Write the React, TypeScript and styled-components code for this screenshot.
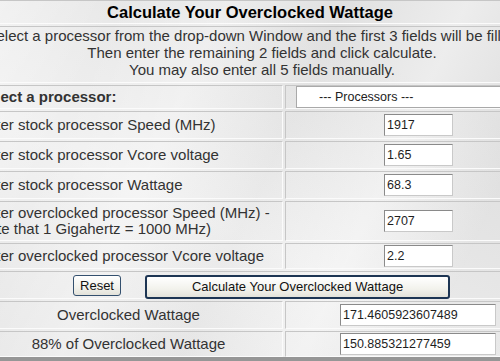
import styled, { createGlobalStyle } from "styled-components";

const GlobalStyle = createGlobalStyle`
  html, body {
    margin: 0;
    padding: 0;
    background: #e8e8e8;
    overflow: hidden;
  }
`;

const Page = styled.div`
  width: 500px;
  height: 361px;
  overflow: hidden;
  background-color: #ececec;
  background-image:
    linear-gradient(115deg, rgba(255,255,255,0.35) 0%, rgba(255,255,255,0) 18%, rgba(255,255,255,0.3) 34%, rgba(0,0,0,0.02) 52%, rgba(255,255,255,0.3) 70%, rgba(0,0,0,0.03) 88%),
    linear-gradient(25deg, rgba(0,0,0,0.025) 0%, rgba(255,255,255,0.25) 40%, rgba(0,0,0,0.03) 80%);
  font-family: "Liberation Sans", Arial, sans-serif;
`;

const Table = styled.div`
  margin-left: -26px;
  width: 550px;
  display: grid;
  grid-template-columns: 309px 1fr;
  grid-template-rows: 24px 57px 24px 28px 28px 28px 40px 26px 28px 28px 26px;
  gap: 2px;
  border-bottom: 4px solid #969696;
`;

const Cell = styled.div<{ $span?: boolean; $center?: boolean }>`
  grid-column: ${(p) => (p.$span ? "1 / span 2" : "auto")};
  box-sizing: border-box;
  border: 1px solid;
  border-color: #c6c6c6 #fbfbfb #fbfbfb #c6c6c6;
  display: flex;
  align-items: center;
  justify-content: ${(p) => (p.$center ? "center" : "flex-start")};
  padding: 0 3px;
  white-space: nowrap;
  min-width: 0;
`;

const Title = styled.div`
  font-size: 16.5px;
  font-weight: bold;
  color: #000;
  padding-left: 2px;
`;

const Intro = styled.div`
  align-self: flex-start;
  display: flex;
  flex-direction: column;
  align-items: center;
  width: 100%;
  box-sizing: border-box;
  padding-left: 26px;
  font-size: 15px;
  line-height: 17px;
  color: #333;
`;

const Label = styled.div<{ $bold?: boolean }>`
  font-size: 15px;
  line-height: 16px;
  color: #333;
  font-weight: ${(p) => (p.$bold ? "bold" : "normal")};
  white-space: pre;
`;

const Field = styled.div<{ $offset: number; $width: number }>`
  box-sizing: border-box;
  margin-left: ${(p) => p.$offset}px;
  width: ${(p) => p.$width}px;
  height: 22px;
  background: #fff;
  border: 1px solid;
  border-color: #8a8a8a #c9c9c9 #c9c9c9 #8a8a8a;
  font-size: 12.5px;
  color: #1e1e1e;
  display: flex;
  align-items: center;
  padding-left: 2px;
`;

const SelectBox = styled.div`
  box-sizing: border-box;
  margin-left: 7px;
  width: 250px;
  height: 22px;
  background: #fff;
  border: 1px solid #a9a9a9;
  font-size: 12.5px;
  color: #222;
  display: flex;
  align-items: center;
  padding-left: 22px;
`;

const Buttons = styled.div`
  display: flex;
  align-items: center;
  gap: 24px;
  padding-left: 95px;
`;

const Button = styled.div<{ $primary?: boolean }>`
  box-sizing: border-box;
  height: ${(p) => (p.$primary ? 24 : 21)}px;
  width: ${(p) => (p.$primary ? 305 : 48)}px;
  border: ${(p) => (p.$primary ? "2px solid #1d3553" : "1px solid #34506e")};
  border-radius: 3px;
  background: linear-gradient(#ffffff, #f2f2ec 60%, #e3e2da);
  font-size: 13px;
  color: #111;
  display: flex;
  align-items: center;
  justify-content: center;
  margin-top: ${(p) => (p.$primary ? 3 : 0)}px;
`;

const App = () => (
  <Page>
    <GlobalStyle />
    <Table>
      <Cell $span $center>
        <Title>Calculate Your Overclocked Wattage</Title>
      </Cell>
      <Cell $span>
        <Intro>
          <span>Select a processor from the drop-down Window and the first 3 fields will be filled in.</span>
          <span>Then enter the remaining 2 fields and click calculate.</span>
          <span>You may also enter all 5 fields manually.</span>
        </Intro>
      </Cell>

      <Cell>
        <Label $bold>Select a processor:</Label>
      </Cell>
      <Cell>
        <SelectBox>--- Processors ---</SelectBox>
      </Cell>

      <Cell>
        <Label>Enter stock processor Speed (MHz)</Label>
      </Cell>
      <Cell>
        <Field $offset={95} $width={69}>1917</Field>
      </Cell>

      <Cell>
        <Label>Enter stock processor Vcore voltage</Label>
      </Cell>
      <Cell>
        <Field $offset={95} $width={69}>1.65</Field>
      </Cell>

      <Cell>
        <Label>Enter stock processor Wattage</Label>
      </Cell>
      <Cell>
        <Field $offset={95} $width={69}>68.3</Field>
      </Cell>

      <Cell>
        <Label>{"Enter overclocked processor Speed (MHz) -\nNote that 1 Gigahertz = 1000 MHz)"}</Label>
      </Cell>
      <Cell>
        <Field $offset={95} $width={69}>2707</Field>
      </Cell>

      <Cell>
        <Label>Enter overclocked processor Vcore voltage</Label>
      </Cell>
      <Cell>
        <Field $offset={95} $width={69}>2.2</Field>
      </Cell>

      <Cell $span>
        <Buttons>
          <Button>Reset</Button>
          <Button $primary>Calculate Your Overclocked Wattage</Button>
        </Buttons>
      </Cell>

      <Cell $center>
        <Label>Overclocked Wattage</Label>
      </Cell>
      <Cell>
        <Field $offset={51} $width={156}>171.4605923607489</Field>
      </Cell>

      <Cell $center>
        <Label>88% of Overclocked Wattage</Label>
      </Cell>
      <Cell>
        <Field $offset={51} $width={156}>150.885321277459</Field>
      </Cell>
    </Table>
  </Page>
);

export default App;
